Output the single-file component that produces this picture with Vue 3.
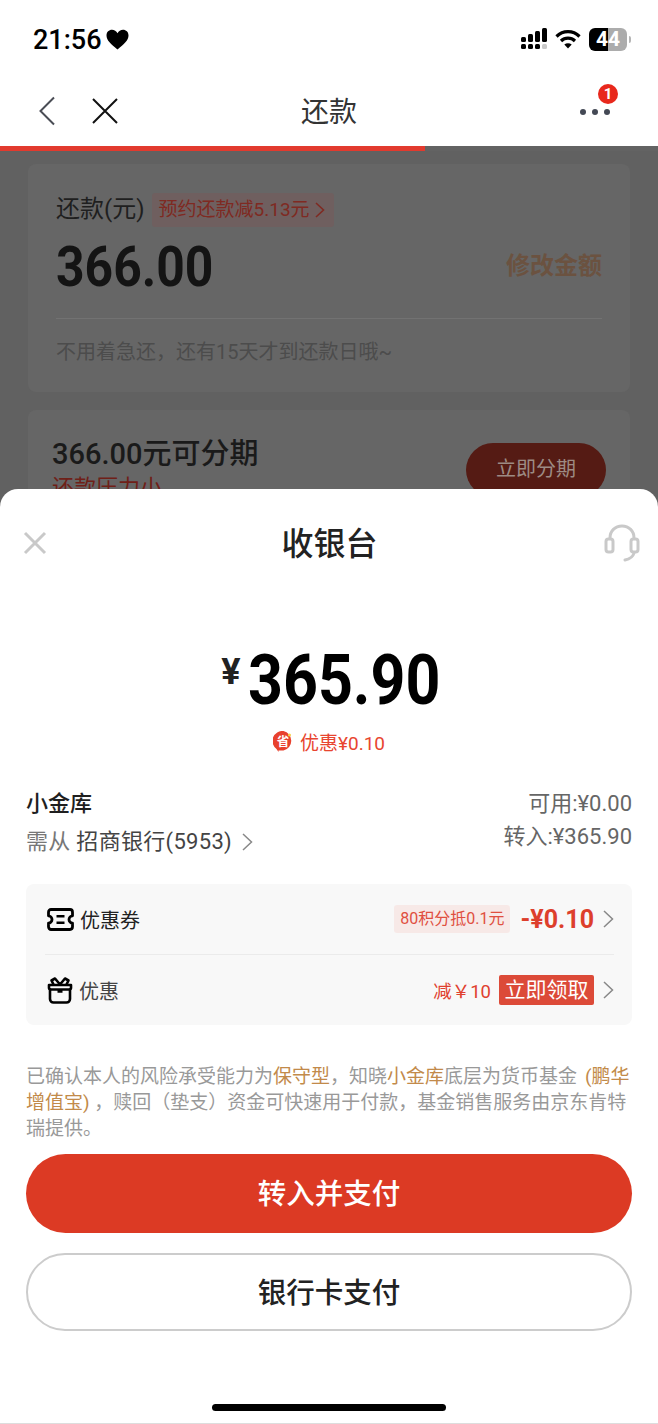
<template>
  <div class="page">
    <div class="status">
      <div class="clock">
        <span>21:56</span>
        <svg width="23" height="21" viewBox="0 0 23 21"><path d="M11.5 20.5C5 15 .5 11.5.5 6.5.5 3 3 .8 6 .8c2.3 0 4.300 1.200 5.500 3.400C12.700 2 14.700.8 17 .8c3 0 5.500 2.200 5.500 5.700 0 5-4.500 8.500-11 14z" fill="#000"/></svg>
      </div>
      <div class="indicators">
        <svg width="26" height="22" viewBox="0 0 26 22">
          <rect x="0" y="9" width="5" height="5" rx="1.5"/><rect x="7" y="6" width="5" height="8" rx="1.5"/><rect x="14" y="3" width="5" height="11" rx="1.5"/><rect x="21" y="0" width="5" height="14" rx="1.5"/>
          <rect x="0" y="16" width="5" height="5" rx="1.5"/><rect x="7" y="16" width="5" height="5" rx="1.5"/><rect x="14" y="16" width="5" height="5" rx="1.5"/><rect x="21" y="16" width="5" height="5" rx="1.5" fill="#c9c9c9"/>
        </svg>
        <svg width="26" height="20" viewBox="0 0 26 20" fill="none" stroke="#000" stroke-width="3.2">
          <path d="M1.5 7.5C8 1 18 1 24.5 7.5"/><path d="M6 12c4-3.800 10-3.800 14 0"/><path d="M13 19.5 9.300 15.500c2.200-1.800 5.200-1.800 7.400 0z" fill="#000" stroke="none"/>
        </svg>
        <div class="battery"><div class="battery-level">44</div><span class="battery-tip"></span></div>
      </div>
    </div>

    <div class="nav">
      <div class="nav-left">
        <svg width="18" height="30" viewBox="0 0 18 30" fill="none" stroke="#4a4d55" stroke-width="2"><path d="M16 1.500 2.500 15 16 28.500"/></svg>
        <svg width="28" height="28" viewBox="0 0 28 28" fill="none" stroke="#111" stroke-width="2"><path d="M2 2 26 26M26 2 2 26"/></svg>
      </div>
      <div class="nav-title">还款</div>
      <div class="nav-more">
        <span class="dot"></span><span class="dot"></span><span class="dot"></span>
        <span class="badge">1</span>
      </div>
    </div>

    <div class="progress"><div class="progress-fill"></div></div>

    <div class="under">
      <div class="card">
        <div class="repay-head">
          <span>还款(元)</span>
          <span class="repay-tag">预约还款减5.13元
            <svg width="10" height="16" viewBox="0 0 10 16" fill="none" stroke="#7f2a22" stroke-width="1.6"><path d="M1 1l7.500 7L1 15"/></svg>
          </span>
        </div>
        <div class="repay-amount">
          <span class="repay-num">366.00</span>
          <span class="repay-edit">修改金额</span>
        </div>
        <div class="repay-note">不用着急还，还有15天才到还款日哦~</div>
      </div>
      <div class="card card-split">
        <div>
          <div class="split-title">366.00元可分期</div>
          <div class="split-sub">还款压力小</div>
        </div>
        <div class="split-btn">立即分期</div>
      </div>
    </div>

    <div class="sheet">
      <div class="sheet-head">
        <svg width="24" height="24" viewBox="0 0 24 24" fill="none" stroke="#c9c9c9" stroke-width="3"><path d="M2 2 22 22M22 2 2 22"/></svg>
        <div class="sheet-title">收银台</div>
        <svg class="headset" width="36" height="38" viewBox="0 0 36 38" fill="none" stroke="#c9c9c9" stroke-width="3">
          <path d="M6 15V14C6 7 11 2 18 2s12 5 12 12v1"/>
          <rect x="2" y="15" width="7" height="13" rx="2.5"/><rect x="27" y="15" width="7" height="13" rx="2.5"/>
          <path d="M30 29c-1 4-4 6-9 7" stroke-linecap="round" stroke-width="3"/>
        </svg>
      </div>

      <div class="amount">
        <span class="amount-sign">¥</span>
        <span class="amount-num">365.90</span>
      </div>
      <div class="promo">
        <svg width="21" height="21" viewBox="0 0 21 21">
          <path d="M10.5 0a10 10 0 0 1 0 19.500H5.500v1.500l-2-3A10 10 0 0 1 10.500 0z" fill="#e8412e"/>
          <text x="10" y="15" text-anchor="middle" font-size="12.5" font-weight="700" fill="#fff">省</text>
          <circle cx="16.5" cy="4" r="1.5" fill="#f8d24a"/>
        </svg>
        <span>优惠¥0.10</span>
      </div>

      <div class="account">
        <div>
          <div class="account-name">小金库</div>
          <div class="account-from">
            <span><span class="gray">需从</span> 招商银行(5953)</span>
            <svg width="11" height="18" viewBox="0 0 11 18" fill="none" stroke="#888" stroke-width="1.5"><path d="M1 1l8.500 8L1 17"/></svg>
          </div>
        </div>
        <div class="account-right">
          <div>可用:¥0.00</div>
          <div>转入:¥365.90</div>
        </div>
      </div>

      <div class="panel">
        <div class="panel-row">
          <svg width="27" height="23" viewBox="0 0 27 22" preserveAspectRatio="none" fill="none" stroke="#000" stroke-width="2.8" stroke-linejoin="round">
            <path d="M4 1.500h19a2.500 2.500 0 0 1 2.500 2.500v3.500a3.500 3.500 0 0 0 0 7V18a2.500 2.500 0 0 1-2.500 2.500H4A2.500 2.500 0 0 1 1.500 18v-3.500a3.500 3.500 0 0 0 0-7V4A2.500 2.500 0 0 1 4 1.500z"/>
            <path d="M9.500 8h8M9.500 14h8" stroke-width="2.4"/>
          </svg>
          <span class="row-label">优惠券</span>
          <span class="row-right">
            <span class="points-tag">80积分抵0.1元</span>
            <span class="discount">-¥0.10</span>
            <svg width="11" height="18" viewBox="0 0 11 18" fill="none" stroke="#888" stroke-width="1.5"><path d="M1 1l8.500 8L1 17"/></svg>
          </span>
        </div>
        <div class="panel-row panel-row-last">
          <svg width="26" height="28" viewBox="0 0 26 28" fill="none" stroke="#000" stroke-width="2.6" stroke-linejoin="round">
            <path d="M2 9h22v3a2 2 0 0 1-1 1.500V23a3.500 3.500 0 0 1-3.500 3.500h-13A3.500 3.500 0 0 1 3 23v-9.500A2 2 0 0 1 2 12z"/>
            <path d="M3 13.500h20M10.500 15.500h5"/>
            <path d="M13 8.500 8 2.500 4.500 4.500 6.500 8.500M13 8.500l5-6 3.500 2-2 4"/>
          </svg>
          <span class="row-label gray-dark">优惠</span>
          <span class="row-right">
            <span class="reduce">减￥10</span>
            <span class="claim">立即领取</span>
            <svg width="11" height="18" viewBox="0 0 11 18" fill="none" stroke="#888" stroke-width="1.5"><path d="M1 1l8.500 8L1 17"/></svg>
          </span>
        </div>
      </div>

      <p class="notice">已确认本人的风险承受能力为<em>保守型</em>，知晓<em>小金库</em>底层为货币基金<em class="fund">(鹏华增值宝)</em> ，赎回（垫支）资金可快速用于付款，基金销售服务由京东肯特瑞提供。</p>

      <div class="btn btn-primary">转入并支付</div>
      <div class="btn btn-outline">银行卡支付</div>
      <div class="home-bar"></div>
    </div>
  </div>
</template>

<script setup>
</script>

<style>
html, body {
  margin: 0;
  background: #fff;
}
</style>

<style scoped>
.page {
  position: relative;
  width: 658px;
  height: 1424px;
  overflow: hidden;
  display: flex;
  flex-direction: column;
  background: #fff;
  font-family: Roboto, "Noto Sans CJK SC", sans-serif;
  color: #222;
}

.status {
  height: 78px;
  padding: 0 27px 0 33px;
  box-sizing: border-box;
  display: flex;
  justify-content: space-between;
  align-items: center;
}

.clock {
  display: flex;
  align-items: center;
  gap: 4px;
  font-size: 27px;
  font-weight: 500;
  color: #000;
  margin-top: 1px;
}

.indicators {
  display: flex;
  align-items: center;
  gap: 8px;
}

.battery {
  position: relative;
  width: 38px;
  height: 23px;
  border-radius: 6px;
  background: linear-gradient(90deg, #000 50%, #acacac 50%);
  margin-right: 4px;
}

.battery-level {
  text-align: center;
  font-size: 21px;
  line-height: 23px;
  font-weight: 700;
  color: #fff;
}

.battery-tip {
  position: absolute;
  right: -4px;
  top: 8px;
  width: 2px;
  height: 7px;
  border-radius: 0 2px 2px 0;
  background: #b5b5b5;
}

.nav {
  height: 68px;
  padding: 0 48px 0 38px;
  box-sizing: border-box;
  display: flex;
  align-items: center;
  justify-content: space-between;
  position: relative;
}

.nav-left {
  display: flex;
  align-items: center;
  gap: 35px;
  margin-top: -3px;
}

.nav-title {
  position: absolute;
  left: 0;
  right: 0;
  text-align: center;
  font-size: 28px;
  color: #333;
  margin-top: -4px;
}

.nav-more {
  position: relative;
  display: flex;
  gap: 6px;
  margin-top: -1px;
}

.dot {
  width: 6px;
  height: 6px;
  border-radius: 50%;
  background: #444955;
}

.badge {
  position: absolute;
  right: -8px;
  top: -25px;
  width: 20px;
  height: 20px;
  border-radius: 50%;
  background: #e8281c;
  color: #fff;
  font-size: 15px;
  font-weight: 700;
  line-height: 20px;
  text-align: center;
}

.progress {
  height: 5px;
  background: #636363;
}

.progress-fill {
  width: 425px;
  height: 100%;
  background: #e23a2e;
}

.under {
  flex: 1;
  background: #616161;
  padding: 13px 28px 0;
  display: flex;
  flex-direction: column;
  gap: 18px;
}

.card {
  background: #666;
  border-radius: 8px;
  padding: 29px 28px 0;
  height: 228px;
  box-sizing: border-box;
}

.repay-head {
  display: flex;
  align-items: center;
  gap: 7px;
  font-size: 24px;
  color: #1f1f1f;
  line-height: 34px;
}

.repay-head > span:first-child {
  margin-top: -2px;
}

.repay-tag {
  display: flex;
  align-items: center;
  gap: 5px;
  height: 34px;
  padding: 0 9px 0 7px;
  background: #6f5f5f;
  border-radius: 3px;
  font-size: 19px;
  color: #7f2a22;
}

.repay-amount {
  display: flex;
  justify-content: space-between;
  align-items: center;
  height: 91px;
  border-bottom: 1px solid #727272;
}

.repay-num {
  font-size: 56px;
  font-weight: 700;
  color: #141414;
  transform: scaleX(.89);
  transform-origin: left center;
  margin-top: -11px;
}

.repay-edit {
  font-size: 24px;
  font-weight: 700;
  color: #6b5240;
  margin-top: -18px;
}

.repay-note {
  margin-top: 17px;
  font-size: 20px;
  color: #4c4c4c;
}

.card-split {
  display: flex;
  justify-content: space-between;
  padding: 25px 24px 0;
}

.split-title {
  font-size: 29px;
  font-weight: 500;
  color: #1a1a1a;
  line-height: 38px;
}

.split-sub {
  font-size: 22px;
  color: #6f2018;
  line-height: 26px;
  margin-top: 2px;
}

.split-btn {
  width: 140px;
  height: 54px;
  margin-top: 8px;
  border-radius: 27px;
  background: #551b14;
  color: #9d8b84;
  font-size: 20px;
  line-height: 52px;
  text-align: center;
}

.sheet {
  position: absolute;
  top: 489px;
  left: 0;
  right: 0;
  bottom: 0;
  background: #fff;
  border-radius: 18px 18px 0 0;
  border-bottom: 1px solid #ddd;
  padding: 0 26px;
  box-sizing: border-box;
}

.sheet-head {
  height: 108px;
  display: grid;
  grid-template-columns: 1fr auto 1fr;
  align-items: center;
  margin-right: -8px;
  margin-left: -3px;
}

.headset {
  justify-self: end;
}

.sheet-title {
  font-size: 32px;
  font-weight: 500;
  color: #222;
  margin: -4px 0 0 -4px;
}

.amount {
  margin-top: 50px;
  margin-left: 2px;
  height: 66px;
  display: flex;
  justify-content: center;
  align-items: center;
  gap: 7px;
}

.amount-sign {
  font-size: 36px;
  font-weight: 700;
  color: #222;
  margin-top: -17px;
}

.amount-num {
  font-size: 70px;
  font-weight: 700;
  color: #000;
  width: 191px;
  white-space: nowrap;
  transform: scaleX(.87);
  transform-origin: left center;
}

.promo {
  margin-top: 16px;
  height: 24px;
  display: flex;
  justify-content: center;
  align-items: center;
  gap: 6px;
  font-size: 19px;
  color: #e8452f;
}

.account {
  margin-top: 36px;
  height: 95px;
  display: flex;
  justify-content: space-between;
  font-size: 22px;
}

.account-name {
  line-height: 30px;
  font-weight: 500;
  color: #1f1f1f;
}

.account-from {
  margin-top: 8px;
  line-height: 30px;
  color: #444;
  display: flex;
  align-items: center;
  gap: 10px;
  letter-spacing: .3px;
}

.gray {
  color: #777;
}

.account-right {
  text-align: right;
  color: #666;
  line-height: 33px;
  margin-top: -2px;
}

.panel {
  background: #f8f8f8;
  border-radius: 8px;
  height: 141px;
  padding: 0 18px 0 21px;
}

.panel-row {
  height: 71px;
  display: flex;
  align-items: center;
  border-bottom: 1px solid #ebebeb;
  box-sizing: border-box;
  margin-left: -2px;
}

.panel-row > svg:first-child {
  margin-left: 2px;
}

.panel-row-last {
  border-bottom: 0;
  height: 70px;
}

.row-label {
  margin-left: 6px;
  font-size: 20px;
  color: #222;
}

.gray-dark {
  color: #444;
}

.row-right {
  margin-left: auto;
  display: flex;
  align-items: center;
}

.points-tag {
  height: 28px;
  line-height: 28px;
  padding: 0 6px;
  background: #f7e9e7;
  border-radius: 3px;
  font-size: 16px;
  color: #e0503f;
}

.discount {
  margin: 1px 9px 0 10px;
  font-size: 25px;
  font-weight: 700;
  color: #dd3f2c;
}

.reduce {
  margin-right: 8px;
  font-size: 18.5px;
  color: #e0402e;
}

.claim {
  width: 95px;
  height: 30px;
  line-height: 30px;
  margin-right: 9px;
  text-align: center;
  background: #dc4a38;
  border-radius: 2px;
  font-size: 21px;
  color: #fff;
}

.notice {
  margin: 39px 0 12px;
  font-size: 19px;
  line-height: 26px;
  color: #999;
  height: 78px;
}

.notice em {
  font-style: normal;
  color: #c28a4a;
}

.notice .fund {
  margin-left: 8px;
}

.btn {
  height: 79px;
  border-radius: 40px;
  box-sizing: border-box;
  display: flex;
  align-items: center;
  justify-content: center;
  padding-bottom: 4px;
  font-size: 28.5px;
  font-weight: 500;
}

.btn-primary {
  background: #dc3a24;
  color: #fff;
}

.btn-outline {
  margin-top: 20px;
  height: 78px;
  border: 2px solid #ccc;
  color: #222;
}

.home-bar {
  width: 234px;
  height: 7px;
  margin: 73px auto 0;
  border-radius: 4px;
  background: #000;
}
</style>
